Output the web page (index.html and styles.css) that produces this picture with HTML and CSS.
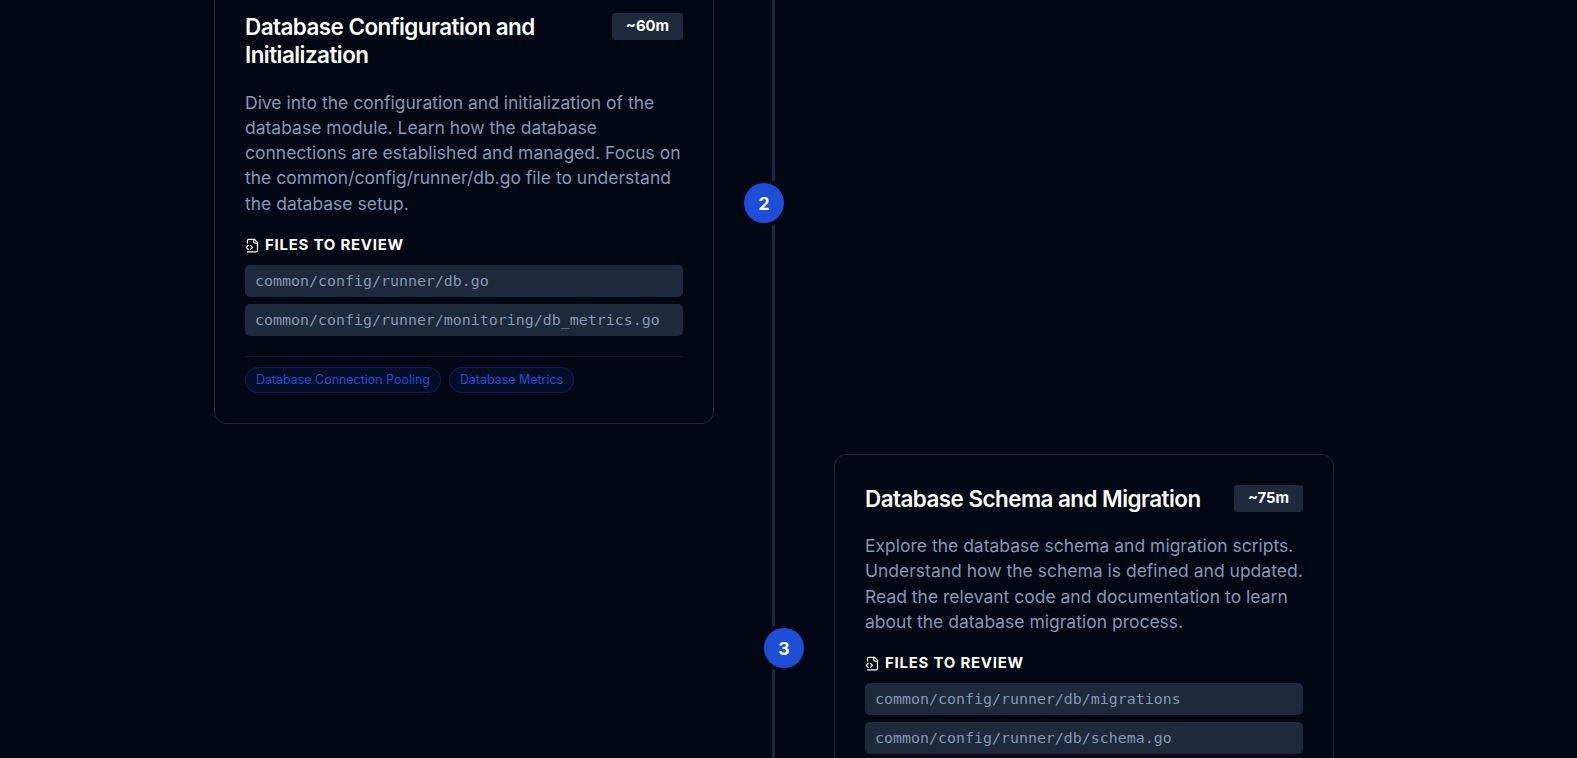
FILE: index.html
```html
<!DOCTYPE html>
<html lang="en">
<head>
<meta charset="utf-8">
<title>Learning path</title>
<link rel="stylesheet" href="styles.css">
</head>
<body>
<main class="timeline">
  <div class="step step-left">
    <article class="card">
      <span class="node">2</span>
      <header class="card-head">
        <h3 class="card-title">Database Configuration and Initialization</h3>
        <span class="duration">~60m</span>
      </header>
      <p class="card-desc">Dive into the configuration and initialization of the database module. Learn how the database connections are established and managed. Focus on the common/config/runner/db.go file to understand the database setup.</p>
      <h4 class="files-title"><svg class="files-icon" viewBox="0 0 24 24" fill="none" stroke="currentColor" stroke-width="2" stroke-linecap="round" stroke-linejoin="round"><path d="M4 22h14a2 2 0 0 0 2-2V7l-5-5H6a2 2 0 0 0-2 2v4"/><path d="M14 2v4a2 2 0 0 0 2 2h4"/><path d="m5 12-3 3 3 3"/><path d="m9 18 3-3-3-3"/></svg>FILES TO REVIEW</h4>
      <ul class="files">
        <li class="file">common/config/runner/db.go</li>
        <li class="file">common/config/runner/monitoring/db_metrics.go</li>
      </ul>
      <div class="tags">
        <span class="tag">Database Connection Pooling</span>
        <span class="tag">Database Metrics</span>
      </div>
    </article>
  </div>
  <div class="step step-right">
    <article class="card">
      <span class="node">3</span>
      <header class="card-head">
        <h3 class="card-title">Database Schema and Migration</h3>
        <span class="duration">~75m</span>
      </header>
      <p class="card-desc">Explore the database schema and migration scripts. Understand how the schema is defined and updated. Read the relevant code and documentation to learn about the database migration process.</p>
      <h4 class="files-title"><svg class="files-icon" viewBox="0 0 24 24" fill="none" stroke="currentColor" stroke-width="2" stroke-linecap="round" stroke-linejoin="round"><path d="M4 22h14a2 2 0 0 0 2-2V7l-5-5H6a2 2 0 0 0-2 2v4"/><path d="M14 2v4a2 2 0 0 0 2 2h4"/><path d="m5 12-3 3 3 3"/><path d="m9 18 3-3-3-3"/></svg>FILES TO REVIEW</h4>
      <ul class="files">
        <li class="file">common/config/runner/db/migrations</li>
        <li class="file">common/config/runner/db/schema.go</li>
      </ul>
      <div class="tags"></div>
    </article>
  </div>
</main>
</body>
</html>
```
FILE: styles.css
```css
* { box-sizing: border-box; }
html, body { height: 100%; }
body {
  margin: 0;
  overflow: hidden;
  background: #020714;
  font-family: Inter, "Liberation Sans", sans-serif;
  color: #fff;
}
.timeline {
  position: relative;
  width: 1120px;
  margin: -18px 0 0 214px;
  display: flex;
  flex-direction: column;
  gap: 29.6px;
}
.timeline::before {
  content: "";
  position: absolute;
  left: 558px;
  top: 0;
  bottom: -100px;
  width: 3px;
  background: #1a2740;
}
.step { display: flex; }
.step-left { justify-content: flex-start; }
.step-right { justify-content: flex-end; }
.card {
  position: relative;
  width: 500px;
  padding: 30px;
  border: 1px solid #1e293b;
  border-radius: 12px;
  background: #020714;
}
.node {
  position: absolute;
  top: 50%;
  width: 40px;
  height: 40px;
  margin-top: -20px;
  border-radius: 50%;
  background: #1d4ed8;
  box-shadow: 0 0 0 4px #020714;
  display: flex;
  align-items: center;
  justify-content: center;
  font-size: 17.6px;
  font-weight: 700;
  color: #fff;
}
.step-left .node { right: -71px; }
.step-right .node { left: -71px; }
.card-head {
  display: flex;
  justify-content: space-between;
  align-items: flex-start;
  gap: 16px;
  margin-bottom: 20px;
}
.card-title {
  margin: 0;
  font-size: 22.4px;
  line-height: 28.4px;
  font-weight: 600;
  letter-spacing: -0.52px;
}
.duration {
  flex: none;
  padding: 0 14px;
  height: 27px;
  line-height: 27px;
  border-radius: 3px;
  background: #1e293b;
  font-size: 14.8px;
  font-weight: 700;
}
.card-desc {
  margin: 0 0 19.4px;
  font-size: 17.5px;
  line-height: 25.2px;
  color: #8498b4;
}
.files-title {
  display: flex;
  align-items: center;
  gap: 5px;
  margin: 0 0 10px;
  font-size: 15px;
  line-height: 20px;
  font-weight: 700;
  letter-spacing: 0.75px;
}
.files-icon { width: 15px; height: 15px; flex: none; }
.files {
  list-style: none;
  margin: 0 0 20px;
  padding: 0;
  display: flex;
  flex-direction: column;
  gap: 7px;
}
.file {
  height: 32px;
  padding: 0 10px;
  border-radius: 5px;
  background: #1e293b;
  font-family: "DejaVu Sans Mono", "Liberation Mono", monospace;
  font-size: 14.95px;
  line-height: 32px;
  color: #8498b4;
}
.tags {
  display: flex;
  flex-wrap: wrap;
  gap: 8px;
  min-height: 37px;
  padding-top: 10px;
  border-top: 1px solid #0f172a;
}
.tag {
  height: 26px;
  padding: 0 10px;
  border: 1px solid rgba(29, 78, 216, 0.25);
  border-radius: 13px;
  background: rgba(29, 78, 216, 0.1);
  font-size: 12.45px;
  line-height: 24px;
  color: #1d4ed8;
}
```
